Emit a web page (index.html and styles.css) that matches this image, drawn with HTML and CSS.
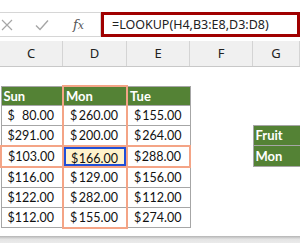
FILE: index.html
```html
<html>
  <head>
    <title>LOOKUP example</title>
    <link rel="stylesheet" href="styles.css">
  </head>
  <body>
    <div class="formula-bar">
      <div class="fx-tools">
        <svg class="tool" viewBox="0 0 12 12" width="12" height="12">
          <path d="M1 1 L11 11 M11 1 L1 11" stroke="#a6a6a6" stroke-width="1.2" fill="none" />
        </svg>
        <svg class="tool" viewBox="0 0 14 12" width="14" height="12">
          <path d="M1 6.5 L5 10.5 L13 1.5" stroke="#a6a6a6" stroke-width="1.4" fill="none" />
        </svg>
        <span class="fx">f<i>x</i></span>
      </div>
      <div class="formula-input">=LOOKUP(H4,B3:E8,D3:D8)</div>
    </div>
    <div class="col-heads">
      <div class="c-c">C</div>
      <div class="c-d">D</div>
      <div class="c-e">E</div>
      <div class="c-f">F</div>
      <div class="c-g">G</div>
    </div>
    <table class="sheet">
      <colgroup>
        <col class="w-c"><col class="w-d"><col class="w-e"><col class="w-f"><col class="w-g">
      </colgroup>
      <tr class="blank"><td></td><td></td><td></td><td></td><td></td></tr>
      <tr>
        <td class="hd">Sun</td><td class="hd mon top">Mon</td><td class="hd">Tue</td><td></td><td></td>
      </tr>
      <tr>
        <td class="cell"><div class="acct"><span>$</span><span>80.00</span></div></td>
        <td class="cell mon"><div class="acct"><span>$</span><span>260.00</span></div></td>
        <td class="cell"><div class="acct"><span>$</span><span>155.00</span></div></td>
        <td></td><td></td>
      </tr>
      <tr>
        <td class="cell"><div class="acct"><span>$</span><span>291.00</span></div></td>
        <td class="cell mon"><div class="acct"><span>$</span><span>200.00</span></div></td>
        <td class="cell"><div class="acct"><span>$</span><span>264.00</span></div></td>
        <td></td><td class="lab">Fruit</td>
      </tr>
      <tr class="sel">
        <td class="cell first"><div class="acct"><span>$</span><span>103.00</span></div></td>
        <td class="cell mon"><div class="acct active"><span>$</span><span>166.00</span></div></td>
        <td class="cell last"><div class="acct"><span>$</span><span>288.00</span></div></td>
        <td></td><td class="lab">Mon</td>
      </tr>
      <tr>
        <td class="cell"><div class="acct"><span>$</span><span>116.00</span></div></td>
        <td class="cell mon"><div class="acct"><span>$</span><span>129.00</span></div></td>
        <td class="cell"><div class="acct"><span>$</span><span>156.00</span></div></td>
        <td></td><td></td>
      </tr>
      <tr>
        <td class="cell"><div class="acct"><span>$</span><span>122.00</span></div></td>
        <td class="cell mon"><div class="acct"><span>$</span><span>282.00</span></div></td>
        <td class="cell"><div class="acct"><span>$</span><span>112.00</span></div></td>
        <td></td><td></td>
      </tr>
      <tr>
        <td class="cell"><div class="acct"><span>$</span><span>112.00</span></div></td>
        <td class="cell mon bottom"><div class="acct"><span>$</span><span>155.00</span></div></td>
        <td class="cell"><div class="acct"><span>$</span><span>274.00</span></div></td>
        <td></td><td></td>
      </tr>
    </table>
    <div class="scroll-edge"></div>
  </body>
</html>
```

FILE: styles.css
```css
body {
  margin: 0;
  width: 300px;
  height: 243px;
  overflow: hidden;
  background: #fff;
  font-family: "Noto Sans", sans-serif;
}
.formula-bar {
  display: flex;
  height: 41px;
  padding-top: 12px;
  box-sizing: border-box;
  background: #fff;
}
.fx-tools {
  display: flex;
  align-items: center;
  gap: 22px;
  width: 101px;
  height: 25px;
  padding-left: 1px;
  box-sizing: border-box;
  border-top: 1px solid #d6d6d6;
  border-bottom: 1px solid #d6d6d6;
  border-right: 1px solid #d6d6d6;
}
.fx {
  margin-left: 2px;
  font-family: "DejaVu Serif", serif;
  font-style: italic;
  font-size: 13px;
  color: #555;
}
.fx i {
  font-size: 11px;
}
.formula-input {
  flex: 1;
  height: 25px;
  box-sizing: border-box;
  border: 3px solid #a00000;
  padding-left: 8px;
  font-size: 12.5px;
  line-height: 19px;
  color: #222;
  white-space: nowrap;
  overflow: hidden;
}
.col-heads {
  display: flex;
  height: 26px;
  box-sizing: border-box;
  background: #f0f0f0;
  border-bottom: 1px solid #c8c8c8;
  font-size: 13px;
  line-height: 25px;
  color: #222;
}
.col-heads div {
  text-align: center;
  border-right: 1px solid #d4d4d4;
  box-sizing: border-box;
}
.c-c { width: 63px; }
.c-d { width: 64px; }
.c-e { width: 63px; }
.c-f { width: 63px; }
.c-g { flex: 1; }
.sheet {
  table-layout: fixed;
  border-collapse: collapse;
  width: 300px;
  font-family: "Lato", sans-serif;
  font-size: 12.5px;
  color: #111;
}
.w-c { width: 62px; }
.w-d { width: 64px; }
.w-e { width: 63px; }
.w-f { width: 63px; }
.w-g { width: 48px; }
.sheet td {
  height: 19px;
  padding: 0;
  white-space: nowrap;
  overflow: hidden;
}
.hd, .lab {
  background: #548235;
  color: #fff;
  font-weight: bold;
  font-size: 13px;
  padding-left: 2px !important;
  border: 1px solid #a6a6a6;
}
.cell {
  border: 1px solid #a6a6a6;
}
.acct {
  display: flex;
  justify-content: space-between;
  height: 19px;
  line-height: 19px;
  padding: 0 8px 0 6px;
  box-sizing: border-box;
}
.mon {
  border-left: 2px solid #f4a486;
  border-right: 2px solid #f4a486;
}
.top {
  border-top: 2px solid #f4a486;
}
.bottom {
  border-bottom: 2px solid #f4a486;
}
.sel .cell {
  border-top: 2px solid #f4a486;
  border-bottom: 2px solid #f4a486;
}
.sel .first {
  border-left: 2px solid #f4a486;
}
.sel .last {
  border-right: 2px solid #f4a486;
}
.active {
  background: #fff2cc;
  border: 2px solid #1f4fd8;
  padding: 0 6px 0 5px;
}
.scroll-edge {
  margin-top: 7px;
  height: 8px;
  background: linear-gradient(#b4b4b4, #e4e4e4 40%, #ececec);
}
```
